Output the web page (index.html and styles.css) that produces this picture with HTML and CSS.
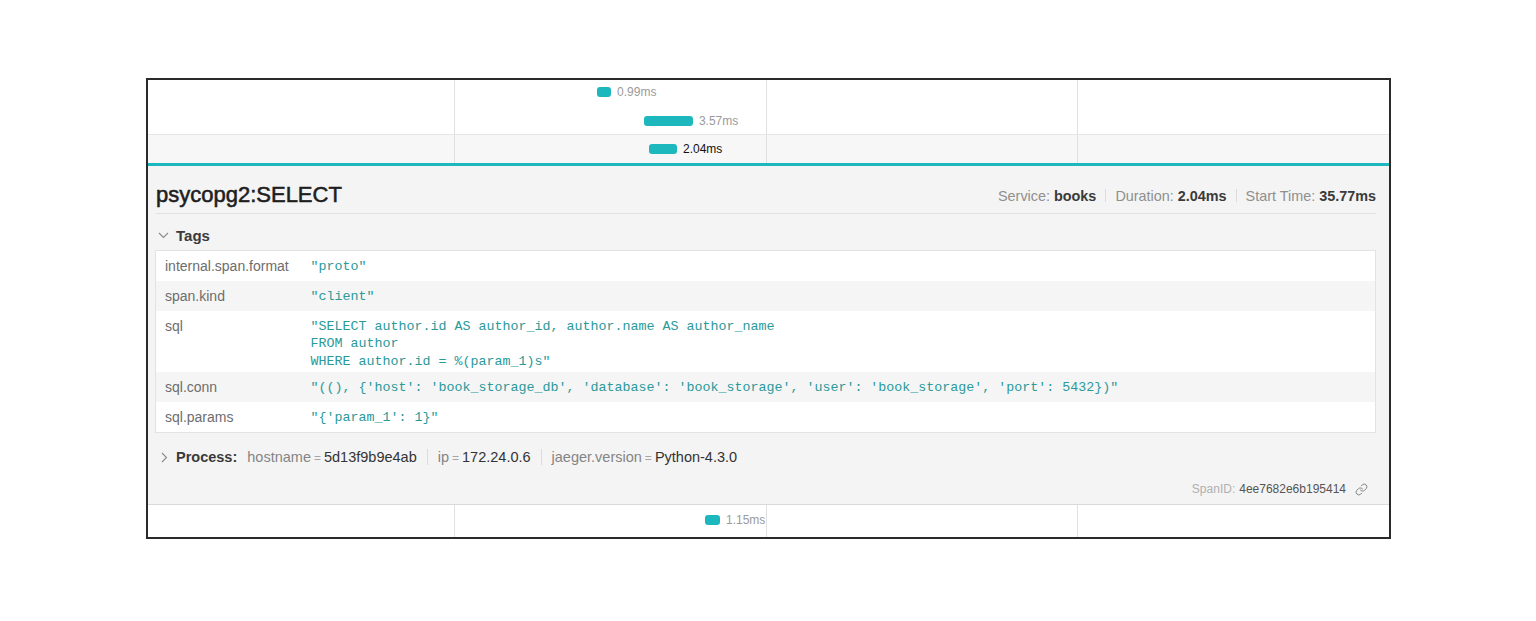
FILE: index.html
```html
<!DOCTYPE html>
<html>
<head>
<meta charset="utf-8">
<link rel="stylesheet" href="styles.css">
</head>
<body>
<div class="frame">
  <div class="row row-first">
    <div class="name-cell"></div>
    <div class="timeline">
      <div class="tick"></div><div class="tick"></div><div class="tick"></div>
      <div class="bar-wrap" style="left:15.3%;width:1.5%"><div class="bar"></div><span class="bar-label">0.99ms</span></div>
    </div>
  </div>
  <div class="row row-second">
    <div class="name-cell"></div>
    <div class="timeline">
      <div class="tick"></div><div class="tick"></div><div class="tick"></div>
      <div class="bar-wrap" style="left:20.3%;width:5.25%"><div class="bar"></div><span class="bar-label">3.57ms</span></div>
    </div>
  </div>
  <div class="row row-selected">
    <div class="name-cell"></div>
    <div class="timeline">
      <div class="tick"></div><div class="tick"></div><div class="tick"></div>
      <div class="bar-wrap" style="left:20.85%;width:3%"><div class="bar"></div><span class="bar-label dark">2.04ms</span></div>
    </div>
  </div>
  <div class="accent"></div>
  <div class="detail">
    <div class="detail-header">
      <h2 class="title">psycopg2:SELECT</h2>
      <div class="overview">
        <span class="ov-item"><span class="ov-label">Service:</span> <b>books</b></span>
        <span class="ov-sep"></span>
        <span class="ov-item"><span class="ov-label">Duration:</span> <b>2.04ms</b></span>
        <span class="ov-sep"></span>
        <span class="ov-item"><span class="ov-label">Start Time:</span> <b>35.77ms</b></span>
      </div>
    </div>
    <div class="section-head">
      <svg class="chev" width="11" height="7" viewBox="0 0 11 7"><path d="M1 1 L5.5 5.5 L10 1" fill="none" stroke="#8a8a8a" stroke-width="1.1"/></svg>
      <span class="section-title">Tags</span>
    </div>
    <table class="kv">
      <tr><td class="k">internal.span.format</td><td class="v">"proto"</td></tr>
      <tr class="alt"><td class="k">span.kind</td><td class="v">"client"</td></tr>
      <tr><td class="k">sql</td><td class="v">"SELECT author.id AS author_id, author.name AS author_name<br>FROM author<br>WHERE author.id = %(param_1)s"</td></tr>
      <tr class="alt"><td class="k">sql.conn</td><td class="v">"((), {'host': 'book_storage_db', 'database': 'book_storage', 'user': 'book_storage', 'port': 5432})"</td></tr>
      <tr><td class="k">sql.params</td><td class="v">"{'param_1': 1}"</td></tr>
    </table>
    <div class="process">
      <svg class="chev-r" width="7" height="11" viewBox="0 0 7 11"><path d="M1 1 L5.5 5.5 L1 10" fill="none" stroke="#8a8a8a" stroke-width="1.1"/></svg>
      <span class="process-title">Process:</span>
      <span class="pi"><span class="pk">hostname</span><span class="eq">=</span><span class="pv">5d13f9b9e4ab</span></span>
      <span class="p-sep"></span>
      <span class="pi"><span class="pk">ip</span><span class="eq">=</span><span class="pv">172.24.0.6</span></span>
      <span class="p-sep"></span>
      <span class="pi"><span class="pk">jaeger.version</span><span class="eq">=</span><span class="pv">Python-4.3.0</span></span>
    </div>
    <div class="span-id">
      <span class="sid-label">SpanID:</span>
      <span class="sid-value">4ee7682e6b195414</span>
      <svg class="link" width="13" height="13" viewBox="0 0 24 24"><path d="M10 13a5 5 0 0 0 7.54.54l3-3a5 5 0 0 0-7.07-7.07l-1.72 1.71" fill="none" stroke="#7a7a7a" stroke-width="1.7" stroke-linecap="round"/><path d="M14 11a5 5 0 0 0-7.54-.54l-3 3a5 5 0 0 0 7.07 7.07l1.71-1.71" fill="none" stroke="#7a7a7a" stroke-width="1.7" stroke-linecap="round"/></svg>
    </div>
  </div>
  <div class="row row-last">
    <div class="name-cell"></div>
    <div class="timeline">
      <div class="tick"></div><div class="tick"></div><div class="tick"></div>
      <div class="bar-wrap" style="left:26.85%;width:1.6%"><div class="bar"></div><span class="bar-label">1.15ms</span></div>
    </div>
  </div>
</div>
</body>
</html>
```
FILE: styles.css
```css
* { box-sizing: border-box; }
body {
  margin: 0;
  padding: 78px 0 0 146px;
  background: #fff;
  font-family: "Liberation Sans", Arial, Helvetica, sans-serif;
  color: #333;
}
.frame {
  width: 1245px;
  border: 2px solid #2a2a2a;
  background: #fff;
  display: flex;
  flex-direction: column;
}
.row {
  display: flex;
  height: 28px;
}
.row-first { height: 26px; }
.row-second { height: 28px; }
.row-selected {
  height: 29px;
  border-top: 1px solid #e6e6e6;
  background: #f7f7f7;
}
.row-last {
  height: 33px;
  border-top: 1px solid #dadada;
}
.name-cell { width: 306px; flex: none; }
.timeline {
  position: relative;
  flex: 1;
  display: grid;
  grid-template-columns: repeat(3, 1fr);
}
.tick { border-left: 1px solid #e0e0e0; }
.bar-wrap {
  position: absolute;
  top: 50%;
  height: 10px;
  margin-top: -5px;
}
.row-first .bar-wrap { margin-top: -6px; height: 9.5px; }
.row-second .bar-wrap { margin-top: -4px; }
.row-last .bar-wrap { margin-top: -6px; height: 9.5px; }
.bar {
  width: 100%;
  height: 100%;
  background: #1db8be;
  border-radius: 3px;
}
.bar-label {
  position: absolute;
  left: calc(100% + 6px);
  top: 50%;
  transform: translateY(-50%);
  font-size: 12px;
  line-height: 14px;
  color: #9a9a9a;
  white-space: nowrap;
}
.bar-label.dark { color: #111; }
.accent {
  height: 3px;
  background: #1db8be;
}
.detail {
  background: #f4f4f4;
  padding: 0 13px 6px 8px;
  display: flex;
  flex-direction: column;
}
.detail-header {
  display: flex;
  align-items: center;
  justify-content: space-between;
  padding-top: 16px;
  padding-bottom: 5px;
  border-bottom: 1px solid #e2e2e2;
}
.title {
  margin: 0;
  font-size: 22px;
  line-height: 26px;
  font-weight: normal;
  color: #1e1e1e;
  -webkit-text-stroke: 0.55px #1e1e1e;
}
.overview {
  display: flex;
  align-items: center;
  font-size: 14.4px;
  line-height: 18px;
  padding-top: 1px;
}
.ov-label { color: #8f8f8f; }
.ov-item b { color: #3a3a3a; font-weight: bold; }
.ov-sep {
  width: 1px;
  height: 13px;
  background: #dcdcdc;
  margin: 0 9px;
}
.section-head {
  display: flex;
  align-items: center;
  margin-top: 11px;
  height: 20px;
  margin-bottom: 5px;
  padding-left: 2px;
}
.chev { margin-right: 7px; margin-top: 1px; }
.section-title {
  font-size: 15px;
  font-weight: bold;
  color: #3a3a3a;
}
.kv {
  border-collapse: collapse;
  border: 1px solid #e3e3e3;
  background: #fff;
  margin-left: -1px;
  width: calc(100% + 1px);
}
.kv tr.alt { background: #f5f5f5; }
.kv td {
  vertical-align: top;
  padding: 4.5px 0;
}
.kv td.k {
  width: 155px;
  padding-left: 9px;
  font-size: 14px;
  line-height: 21px;
  color: #6d6d6d;
}
.kv td.v {
  font-family: "Liberation Mono", "Courier New", monospace;
  font-size: 13.33px;
  line-height: 17.5px;
  color: #2a9a9a;
  padding-top: 6.5px;
  padding-bottom: 2px;
  white-space: nowrap;
}
.process {
  display: flex;
  align-items: center;
  margin-top: 14px;
  height: 20px;
  font-size: 14.5px;
  padding-left: 5px;
}
.chev-r { margin-right: 8px; }
.process-title {
  font-weight: bold;
  font-size: 14.5px;
  color: #3a3a3a;
  margin-right: 10px;
}
.pk { color: #858585; }
.eq { color: #a5a5a5; font-size: 12px; margin: 0 3px; }
.pv { color: #333; }
.p-sep {
  width: 1px;
  height: 16px;
  background: #dcdcdc;
  margin: 0 10px;
}
.span-id {
  display: flex;
  align-items: center;
  justify-content: flex-end;
  margin-top: 13px;
  height: 18px;
  font-size: 12px;
  padding-right: 8px;
}
.sid-label { color: #b0b0b0; margin-right: 4px; }
.sid-value { color: #555; }
.link { margin-left: 9px; }
```
